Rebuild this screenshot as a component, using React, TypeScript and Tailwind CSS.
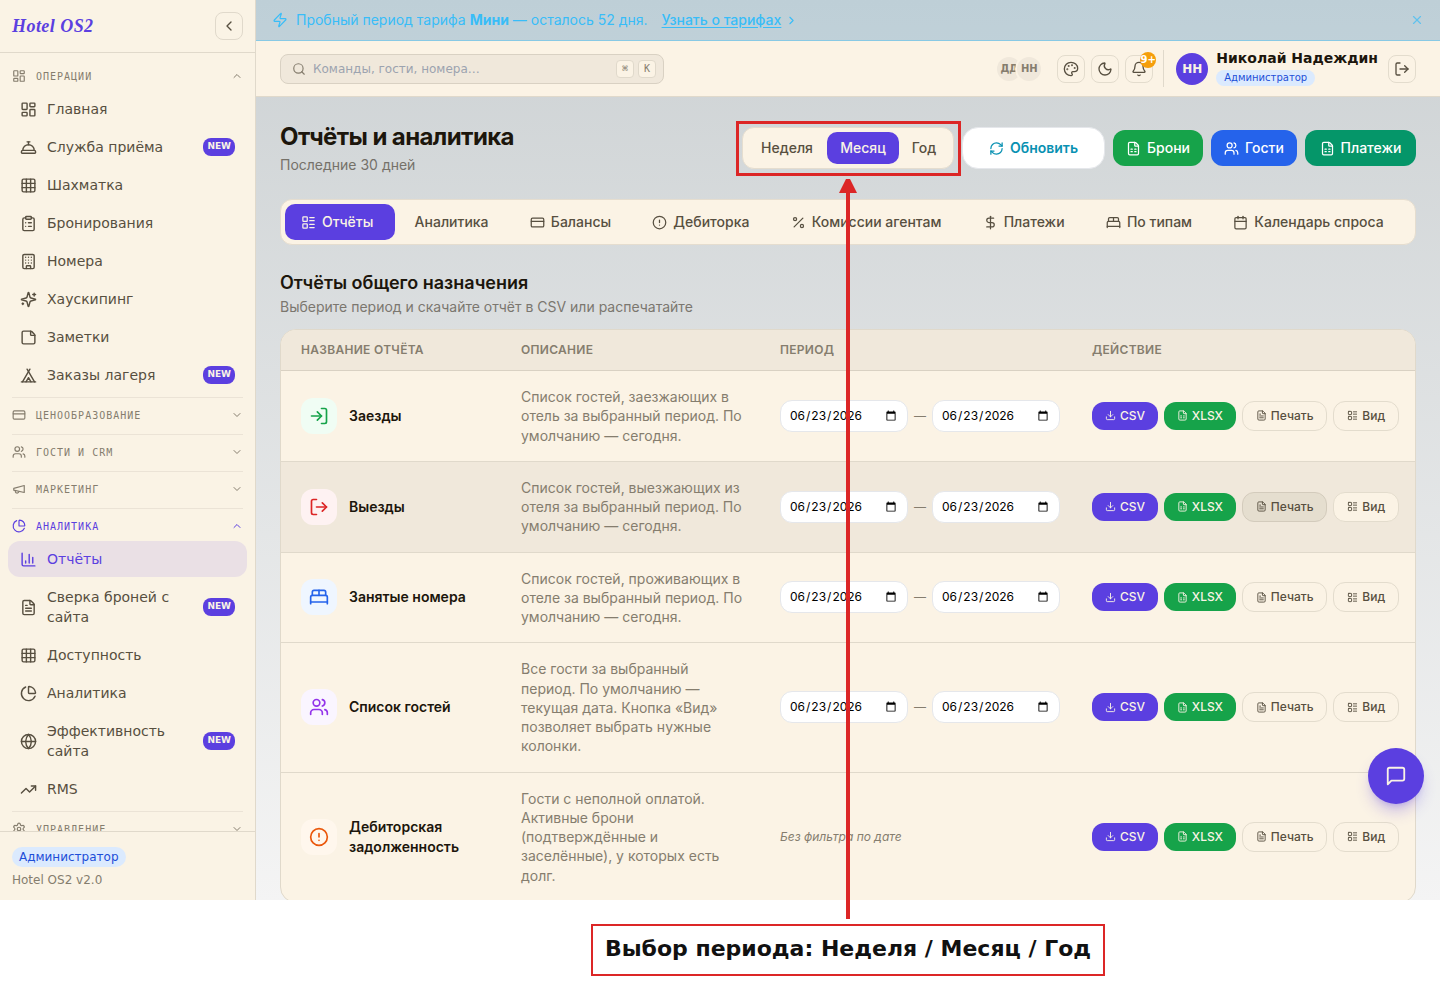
import React, { useState } from 'react';
import {
  BedDouble, Bell, Building, Calendar, ChartColumn, ChartPie, ChevronDown, ChevronLeft, ChevronRight, ChevronUp,
  CircleAlert, ClipboardList, ConciergeBell, CreditCard, DollarSign, Download, FileSpreadsheet, FileText, Globe,
  Grid3x3, LayoutDashboard, LayoutList, LogIn, LogOut, Moon, Palette, Percent, RefreshCw,
  Search, Settings, StickyNote, Tent, TrendingUp, Users, X, Zap,
} from 'lucide-react';

interface IconProps {
  size?: number;
  strokeWidth?: number;
  className?: string;
}

type IconType = React.ComponentType<IconProps>;

interface NavItem {
  label: string;
  icon: IconType;
  isNew?: boolean;
  active?: boolean;
}

interface NavSection {
  title: string;
  icon: IconType;
  active?: boolean;
  items?: NavItem[];
}

interface Report {
  id: string;
  title: string;
  description: string;
  icon: IconType;
  tone: string;
  hasPeriod: boolean;
  hovered?: boolean;
}

function StrokeIcon({ size = 24, strokeWidth = 2, className, children }: IconProps & { children: React.ReactNode }) {
  return (
    <svg
      width={size}
      height={size}
      viewBox="0 0 24 24"
      fill="none"
      stroke="currentColor"
      strokeWidth={strokeWidth}
      strokeLinecap="round"
      strokeLinejoin="round"
      className={className}
    >
      {children}
    </svg>
  );
}

const MegaphoneIcon = (props: IconProps) => (
  <StrokeIcon {...props}>
    <path d="m3 11 18-5v12L3 14v-3z" />
    <path d="M11.6 16.8a3 3 0 1 1-5.8-1.6" />
  </StrokeIcon>
);

const SparklesIcon = (props: IconProps) => (
  <StrokeIcon {...props}>
    <path d="M9.937 15.5A2 2 0 0 0 8.5 14.063l-6.135-1.582a.5.5 0 0 1 0-.962L8.5 9.936A2 2 0 0 0 9.937 8.5l1.582-6.135a.5.5 0 0 1 .963 0L14.063 8.5A2 2 0 0 0 15.5 9.937l6.135 1.581a.5.5 0 0 1 0 .964L15.5 14.063a2 2 0 0 0-1.437 1.437l-1.582 6.135a.5.5 0 0 1-.963 0z" />
    <path d="M20 3v4M22 5h-4M4 17v2M5 18H3" />
  </StrokeIcon>
);

const ChatIcon = (props: IconProps) => (
  <StrokeIcon {...props}>
    <path d="M21 15a2 2 0 0 1-2 2H7l-4 4V5a2 2 0 0 1 2-2h14a2 2 0 0 1 2 2z" />
  </StrokeIcon>
);

const SECTIONS: NavSection[] = [
  {
    title: 'Операции',
    icon: LayoutDashboard,
    items: [
      { label: 'Главная', icon: LayoutDashboard },
      { label: 'Служба приёма', icon: ConciergeBell, isNew: true },
      { label: 'Шахматка', icon: Grid3x3 },
      { label: 'Бронирования', icon: ClipboardList },
      { label: 'Номера', icon: Building },
      { label: 'Хаускипинг', icon: SparklesIcon },
      { label: 'Заметки', icon: StickyNote },
      { label: 'Заказы лагеря', icon: Tent, isNew: true },
    ],
  },
  { title: 'Ценообразование', icon: CreditCard },
  { title: 'Гости и CRM', icon: Users },
  { title: 'Маркетинг', icon: MegaphoneIcon },
  {
    title: 'Аналитика',
    icon: ChartPie,
    active: true,
    items: [
      { label: 'Отчёты', icon: ChartColumn, active: true },
      { label: 'Сверка броней с сайта', icon: FileText, isNew: true },
      { label: 'Доступность', icon: Grid3x3 },
      { label: 'Аналитика', icon: ChartPie },
      { label: 'Эффективность сайта', icon: Globe, isNew: true },
      { label: 'RMS', icon: TrendingUp },
    ],
  },
  { title: 'Управление', icon: Settings },
];

const PERIODS = [
  { label: 'Неделя', width: 'min-w-20' },
  { label: 'Месяц', width: 'min-w-18' },
  { label: 'Год', width: 'min-w-[50px]' },
];

const TABS: { label: string; icon?: IconType }[] = [
  { label: 'Отчёты', icon: LayoutList },
  { label: 'Аналитика' },
  { label: 'Балансы', icon: CreditCard },
  { label: 'Дебиторка', icon: CircleAlert },
  { label: 'Комиссии агентам', icon: Percent },
  { label: 'Платежи', icon: DollarSign },
  { label: 'По типам', icon: BedDouble },
  { label: 'Календарь спроса', icon: Calendar },
];

const REPORTS: Report[] = [
  {
    id: 'arrivals',
    title: 'Заезды',
    description: 'Список гостей, заезжающих в отель за выбранный период. По умолчанию — сегодня.',
    icon: LogIn,
    tone: 'bg-[#f0fdf4] text-[#16a34a]',
    hasPeriod: true,
  },
  {
    id: 'departures',
    title: 'Выезды',
    description: 'Список гостей, выезжающих из отеля за выбранный период. По умолчанию — сегодня.',
    icon: LogOut,
    tone: 'bg-[#fef2f2] text-[#dc2626]',
    hasPeriod: true,
    hovered: true,
  },
  {
    id: 'occupied',
    title: 'Занятые номера',
    description: 'Список гостей, проживающих в отеле за выбранный период. По умолчанию — сегодня.',
    icon: BedDouble,
    tone: 'bg-[#eff6ff] text-[#2563eb]',
    hasPeriod: true,
  },
  {
    id: 'guests',
    title: 'Список гостей',
    description: 'Все гости за выбранный период. По умолчанию — текущая дата. Кнопка «Вид» позволяет выбрать нужные колонки.',
    icon: Users,
    tone: 'bg-[#faf5ff] text-[#9333ea]',
    hasPeriod: true,
  },
  {
    id: 'debts',
    title: 'Дебиторская задолженность',
    description: 'Гости с неполной оплатой. Активные брони (подтверждённые и заселённые), у которых есть долг.',
    icon: CircleAlert,
    tone: 'bg-[#fff7ed] text-[#ea580c]',
    hasPeriod: false,
  },
];

function Sidebar() {
  return (
    <aside className="w-64 shrink-0 flex flex-col bg-[#faf3e5] border-r border-[#e0d9cb] font-['DejaVu_Sans',sans-serif]">
      <div className="h-[53px] shrink-0 px-3 flex items-center justify-between border-b border-[#e0d9cb]">
        <span className="font-['Liberation_Serif',serif] text-lg font-bold italic tracking-wide text-[#5b3fe0]">Hotel OS2</span>
        <button aria-label="Свернуть меню" className="w-7 h-7 flex items-center justify-center border border-[#e0d9cb] rounded-lg text-[#574f40]">
          <ChevronLeft size={16} />
        </button>
      </div>

      <nav className="flex-1 min-h-0 overflow-hidden px-3 pt-[5px]">
        {SECTIONS.map((section, i) => {
          const Icon = section.icon;
          return (
            <div key={section.title} className={`border-t py-1 ${i === 0 ? 'border-transparent' : 'border-[#ebe3d6]'}`}>
              <button className={`w-full h-7 pb-0.5 flex items-center gap-2.5 ${section.active ? 'text-[#5b3fe0]' : 'text-[#857d6e]'}`}>
                <Icon size={14} />
                <span className="flex-1 text-left font-['DejaVu_Sans_Mono',monospace] text-[10px] uppercase tracking-widest">{section.title}</span>
                {section.items ? <ChevronUp size={12} /> : <ChevronDown size={12} />}
              </button>
              {section.items && (
                <ul className="-mx-1 space-y-0.5">
                  {section.items.map((item) => (
                    <li key={item.label}>
                      <a
                        href="#"
                        className={`flex items-center gap-2.5 px-3 py-2 rounded-xl text-sm ${item.active ? 'bg-[#eae0e5] text-[#5b3fe0]' : 'text-[#574f40]'}`}
                      >
                        <item.icon size={17} className="shrink-0" />
                        <span className="flex-1">{item.label}</span>
                        {item.isNew && (
                          <span className="h-[18px] px-1 rounded-lg bg-[#5b3fe0] text-[#faf3e5] text-[9px] leading-4 font-bold">NEW</span>
                        )}
                      </a>
                    </li>
                  ))}
                </ul>
              )}
            </div>
          );
        })}
      </nav>

      <div className="shrink-0 border-t border-[#e0d9cb] px-3 pt-[15px] pb-3 text-xs">
        <span className="inline-block px-[7px] leading-5 rounded-full bg-[#dbeafe] text-[#1d4ed8]">Администратор</span>
        <p className="mt-[5px] text-[#857d6e]">Hotel OS2 v2.0</p>
      </div>
    </aside>
  );
}

function TrialBanner() {
  return (
    <div className="h-[41px] shrink-0 px-4 flex items-center bg-[#38bdf8]/10 border-b border-[#38bdf8]/40 text-sm text-[#38bdf8]">
      <Zap size={16} strokeWidth={1.75} />
      <p className="ml-2">
        Пробный период тарифа <strong className="font-bold">Мини</strong> — осталось 52 дня.
      </p>
      <a href="#" className="ml-3.5 flex items-center gap-1 font-medium">
        <span className="underline underline-offset-2">Узнать о тарифах</span>
        <ChevronRight size={13} />
      </a>
      <button aria-label="Закрыть" className="ml-auto opacity-70">
        <X size={14} />
      </button>
    </div>
  );
}

function IconButton({ label, children }: { label: string; children: React.ReactNode }) {
  return (
    <button aria-label={label} className="relative w-7 h-7 flex items-center justify-center border border-[#e3dccd] rounded-lg text-[#574f40]">
      {children}
    </button>
  );
}

function Topbar() {
  return (
    <header className="h-14 shrink-0 px-6 flex items-center justify-between bg-[#fbf3e5] border-b border-[#e0d9cb] font-['DejaVu_Sans',sans-serif]">
      <label className="w-96 h-[30px] pl-[11px] pr-[7px] flex items-center gap-1 bg-[#f0e8db] border border-[#d9d1c3] rounded-lg text-[#857d6e]">
        <Search size={14} />
        <input
          type="text"
          aria-label="Поиск"
          placeholder="Команды, гости, номера…"
          className="flex-1 min-w-0 ml-[3px] bg-transparent text-xs placeholder:text-[#9ca3af] focus:outline-none"
        />
        <kbd className="w-[18px] h-[18px] flex items-center justify-center bg-[#fbf3e5] border border-[#e0d9cb] rounded font-['DejaVu_Sans_Mono',monospace] text-[10px]">⌘</kbd>
        <kbd className="w-[18px] h-[18px] flex items-center justify-center bg-[#fbf3e5] border border-[#e0d9cb] rounded font-['DejaVu_Sans_Mono',monospace] text-[10px]">K</kbd>
      </label>

      <div className="flex items-center">
        <div className="flex mr-4 text-[10px] font-bold text-[#857d6e]">
          <span className="w-6 h-6 flex items-center justify-center rounded-full bg-[#f0e8db]">ДД</span>
          <span className="-ml-1 w-6 h-6 flex items-center justify-center rounded-full bg-[#f0e8db] ring-2 ring-[#fbf3e5]">НН</span>
        </div>
        <div className="flex gap-1.5">
          <IconButton label="Тема"><Palette size={16} /></IconButton>
          <IconButton label="Тёмный режим"><Moon size={16} /></IconButton>
          <IconButton label="Уведомления">
            <Bell size={16} />
            <span className="absolute -top-1 -right-1 w-4 h-4 flex items-center justify-center rounded-full bg-[#f59e0b] text-white text-[10px] font-bold">9+</span>
          </IconButton>
        </div>
        <div className="ml-2.5 h-[37px] pl-3 flex items-center border-l border-[#e0d9cb]">
          <span className="w-8 h-8 flex items-center justify-center rounded-full bg-[#5b3fe0] text-[#faf3e5] text-xs font-bold">НН</span>
          <div className="ml-2 mr-2.5 pb-1 flex flex-col items-start">
            <span className="text-sm font-bold text-[#1c160c]">Николай Надеждин</span>
            <span className="mt-0.5 px-2 leading-4 rounded-full bg-[#dbeafe] text-[#1d4ed8] text-[10px]">Администратор</span>
          </div>
          <IconButton label="Выйти"><LogOut size={16} /></IconButton>
        </div>
      </div>
    </header>
  );
}

function PeriodSwitch() {
  const [period, setPeriod] = useState('Месяц');
  return (
    <div className="relative">
      <div className="flex p-1 bg-[#fbf3e5] border border-[#e5ddcf] rounded-xl">
        {PERIODS.map(({ label, width }) => (
          <button
            key={label}
            onClick={() => setPeriod(label)}
            className={`h-8 px-3 rounded-[10px] font-medium ${width} ${period === label ? 'bg-[#5b3fe0] text-[#faf3e5]' : 'text-[#574f40]'}`}
          >
            {label}
          </button>
        ))}
      </div>
      {/* Callout frame */}
      <div className="absolute -top-1.5 -left-1.5 -right-[7px] -bottom-[7px] border-3 border-[#dc2626] pointer-events-none" />
    </div>
  );
}

function ReportRow({ report }: { report: Report }) {
  const [from, setFrom] = useState('2026-06-23');
  const [to, setTo] = useState('2026-06-23');
  const Icon = report.icon;
  const dateClass = 'w-32 h-8 px-2 bg-white border border-[#e5e7eb] rounded-xl text-xs text-black';

  return (
    <tr className={`border-b border-[#e0d9cb] ${report.hovered ? 'bg-[#f0e8db]' : ''}`}>
      <td className="pl-5 pr-4 py-4">
        <div className="flex items-center gap-3">
          <span className={`w-9 h-9 shrink-0 flex items-center justify-center rounded-xl ${report.tone}`}>
            <Icon size={20} />
          </span>
          <span className="font-semibold text-[#1c160c]">{report.title}</span>
        </div>
      </td>
      <td className="pl-4 pr-5 py-4 leading-snug text-[#857d6e]">{report.description}</td>
      <td className="px-4 py-4 text-[#857d6e] text-xs">
        {report.hasPeriod ? (
          <div className="flex items-center gap-1.5">
            <input type="date" aria-label={`${report.title}: с`} value={from} onChange={(e) => setFrom(e.target.value)} className={dateClass} />
            <span>—</span>
            <input type="date" aria-label={`${report.title}: по`} value={to} onChange={(e) => setTo(e.target.value)} className={dateClass} />
          </div>
        ) : (
          <span className="italic">Без фильтра по дате</span>
        )}
      </td>
      <td className="px-4 py-4">
        <div className="flex items-center gap-1.5 text-xs font-medium">
          <button className="grow h-7 px-3 flex items-center justify-center gap-1 rounded-xl bg-[#5b3fe0] text-[#faf3e5]">
            <Download size={11} /> CSV
          </button>
          <button className="grow h-7 px-3 flex items-center justify-center gap-1 rounded-xl bg-[#16a34a] text-[#faf3e5]">
            <FileSpreadsheet size={11} /> XLSX
          </button>
          <button
            className={`grow h-[30px] px-3 flex items-center justify-center gap-1 rounded-xl border text-[#574f40] ${report.hovered ? 'bg-[#e5decf] border-[#d3cbbc]' : 'bg-[#fbf3e5] border-[#e3dccd]'}`}
          >
            <FileText size={11} /> Печать
          </button>
          <button className="grow h-[30px] px-3 flex items-center justify-center gap-1 rounded-xl border border-[#e3dccd] bg-[#fbf3e5] text-[#574f40]">
            <LayoutList size={11} /> Вид
          </button>
        </div>
      </td>
    </tr>
  );
}

function ReportsPage() {
  const [tab, setTab] = useState('Отчёты');
  return (
    <main className="flex-1 min-h-0 overflow-hidden p-6 text-sm">
      <div className="flex items-center justify-between">
        <div>
          <h1 className="text-2xl font-bold tracking-tight text-[#1c160c]">Отчёты и аналитика</h1>
          <p className="mt-0.5 text-[#757169]">Последние 30 дней</p>
        </div>
        <div className="flex items-center gap-2">
          <PeriodSwitch />
          <button className="min-w-[143px] h-[42px] px-6 flex items-center justify-center gap-1.5 bg-white border border-[#e5e7eb] rounded-2xl font-semibold text-[#0891b2]">
            <RefreshCw size={15} /> Обновить
          </button>
          <button className="min-w-[90px] h-9 px-3 flex items-center justify-center gap-1.5 rounded-xl bg-[#16a34a] font-medium text-white">
            <FileSpreadsheet size={15} /> Брони
          </button>
          <button className="min-w-[86px] h-9 px-3 flex items-center justify-center gap-1.5 rounded-xl bg-[#2563eb] font-medium text-white">
            <Users size={15} /> Гости
          </button>
          <button className="min-w-[111px] h-9 px-3 flex items-center justify-center gap-1.5 rounded-xl bg-[#059669] font-medium text-white">
            <FileSpreadsheet size={15} /> Платежи
          </button>
        </div>
      </div>

      {/* Tabs */}
      <div className="mt-6 p-1 pr-2.5 flex gap-1 bg-[#fbf3e5] border border-[#e5ddcf] rounded-xl">
        {TABS.map(({ label, icon: Icon }) => (
          <button
            key={label}
            onClick={() => setTab(label)}
            className={`grow h-9 px-4 flex items-center gap-1.5 rounded-[10px] font-medium whitespace-nowrap ${tab === label ? 'bg-[#5b3fe0] text-[#faf3e5]' : 'text-[#574f40]'}`}
          >
            {Icon && <Icon size={15} />}
            {label}
          </button>
        ))}
      </div>

      <h2 className="mt-6 text-lg leading-7 font-semibold text-[#1c160c]">Отчёты общего назначения</h2>
      <p className="text-[#7b776f]">Выберите период и скачайте отчёт в CSV или распечатайте</p>

      <div className="mt-3 bg-[#fbf3e5] border border-[#e0d9cb] rounded-2xl overflow-hidden">
        <table className="w-full table-fixed">
          <colgroup>
            <col className="w-56" />
            <col />
            <col className="w-[312px]" />
            <col className="w-[339px]" />
          </colgroup>
          <thead>
            <tr className="bg-[#f0e8db] border-b border-[#d9d1c3] text-left text-xs uppercase tracking-wide text-[#857d6e]">
              <th className="pl-5 pr-4 py-3 font-semibold">Название отчёта</th>
              <th className="px-4 py-3 font-semibold">Описание</th>
              <th className="px-4 py-3 font-semibold">Период</th>
              <th className="px-4 py-3 font-semibold">Действие</th>
            </tr>
          </thead>
          <tbody>
            {REPORTS.map((report) => (
              <ReportRow key={report.id} report={report} />
            ))}
          </tbody>
        </table>
      </div>
    </main>
  );
}

export default function App() {
  return (
    <div className="relative h-screen flex flex-col bg-white font-['Inter',sans-serif]">
      <div className="relative flex-1 min-h-0 flex overflow-hidden bg-linear-to-b from-[#cdd2d4] to-[#f4f4f4]">
        <Sidebar />
        <div className="flex-1 min-w-0 flex flex-col">
          <TrialBanner />
          <Topbar />
          <ReportsPage />
        </div>
        <button
          aria-label="Открыть чат"
          className="absolute right-4 bottom-24 w-14 h-14 flex items-center justify-center rounded-full bg-[#5b3fe0] text-[#faf3e5] shadow-lg shadow-[#5b3fe0]/30"
        >
          <ChatIcon size={22} />
        </button>
      </div>

      {/* Caption and the arrow that points from it to the period switch */}
      <div className="h-[99px] shrink-0 pl-64 flex items-center justify-center">
        <p className="h-[52px] px-3 border-2 border-[#dc2626] bg-white font-['DejaVu_Sans',sans-serif] text-[22px] leading-[46px] font-bold text-[#111111]">
          Выбор периода: Неделя / Месяц / Год
        </p>
      </div>
      <div className="absolute left-64 right-0 top-[179px] bottom-20 flex flex-col items-center pointer-events-none">
        <svg width="18" height="14" viewBox="0 0 18 14" className="shrink-0">
          <path d="M7 0h4l7 14H0z" fill="#dc2626" />
        </svg>
        <div className="w-1 flex-1 bg-[#dc2626]" />
      </div>
    </div>
  );
}
